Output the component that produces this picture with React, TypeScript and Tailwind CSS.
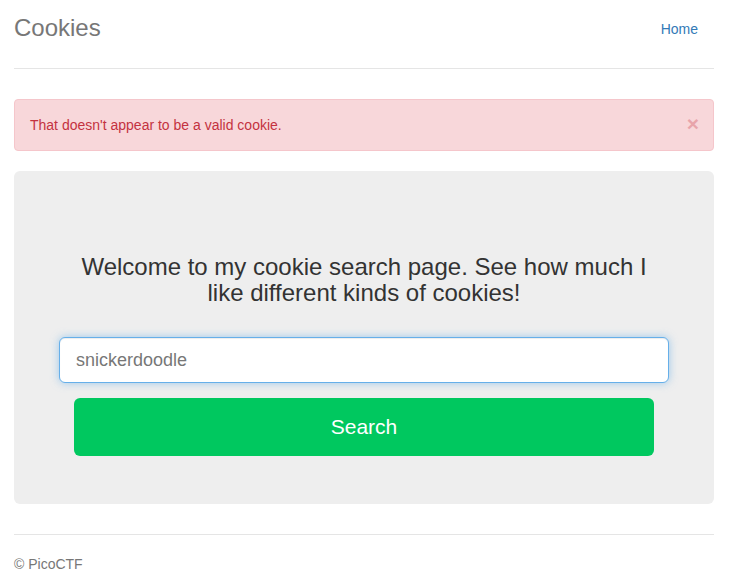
import { useState } from "react";

// ── Page ───────────────────────────────────────────
export default function App() {
    const [cookie, setCookie] = useState("");
    const [showAlert, setShowAlert] = useState(true);

    return (
        <div className="min-h-[581px] bg-white pl-[14px] pr-[20px] font-['Liberation_Sans',Arial,sans-serif] text-[14px] text-[#333]">
            {/* Header */}
            <div className="flex items-center justify-between border-b border-[#e5e5e5] pt-[8px] pb-[20px]">
                <h3 className="m-0 text-[24px] leading-[40px] text-[#777]">Cookies</h3>
                <nav>
                    <a href="#" className="block pl-[15px] pr-[16px] pt-[11px] pb-[9px] leading-[20px] text-[#337ab7]">
                        Home
                    </a>
                </nav>
            </div>

            {/* Alert */}
            {showAlert && (
                <div className="mt-[30px] flex items-center justify-between rounded-[4px] border border-[#f5c6cb] bg-[#f8d7da] px-[15px] py-[15px] leading-[20px] text-[#c4323f]">
                    <span>That doesn't appear to be a valid cookie.</span>
                    <button
                        onClick={() => setShowAlert(false)}
                        className="-mt-[2px] -mr-[1px] text-[21px] leading-[20px] font-bold text-[#c4323f] opacity-30"
                        aria-label="Close"
                    >
                        ×
                    </button>
                </div>
            )}

            {/* Jumbotron */}
            <div className="mt-[20px] rounded-[6px] bg-[#eee] px-[45px] pt-[83px] pb-[48px] text-center">
                <h3 className="mx-auto mb-[31px] max-w-[590px] text-[24px] leading-[26px] text-[#333]">
                    Welcome to my cookie search page. See how much I like different kinds of cookies!
                </h3>
                <form onSubmit={(e) => e.preventDefault()}>
                    <input
                        value={cookie}
                        onChange={(e) => setCookie(e.target.value)}
                        placeholder="snickerdoodle"
                        className="block h-[46px] w-full rounded-[6px] border border-[#66afe9] bg-white px-[16px] text-[18px] text-[#555] placeholder:text-[#777] shadow-[inset_0_1px_1px_rgba(0,0,0,.075),0_0_8px_rgba(102,175,233,.6)] outline-none"
                    />
                    <button
                        type="submit"
                        className="mx-[15px] mt-[15px] block h-[58px] w-[calc(100%-30px)] rounded-[6px] bg-[#00c85f] text-[21px] text-white"
                    >
                        Search
                    </button>
                </form>
            </div>

            {/* Footer */}
            <footer className="mt-[30px] border-t border-[#e5e5e5] pt-[19px] leading-[20px] text-[#777]">
                © PicoCTF
            </footer>
        </div>
    );
}
